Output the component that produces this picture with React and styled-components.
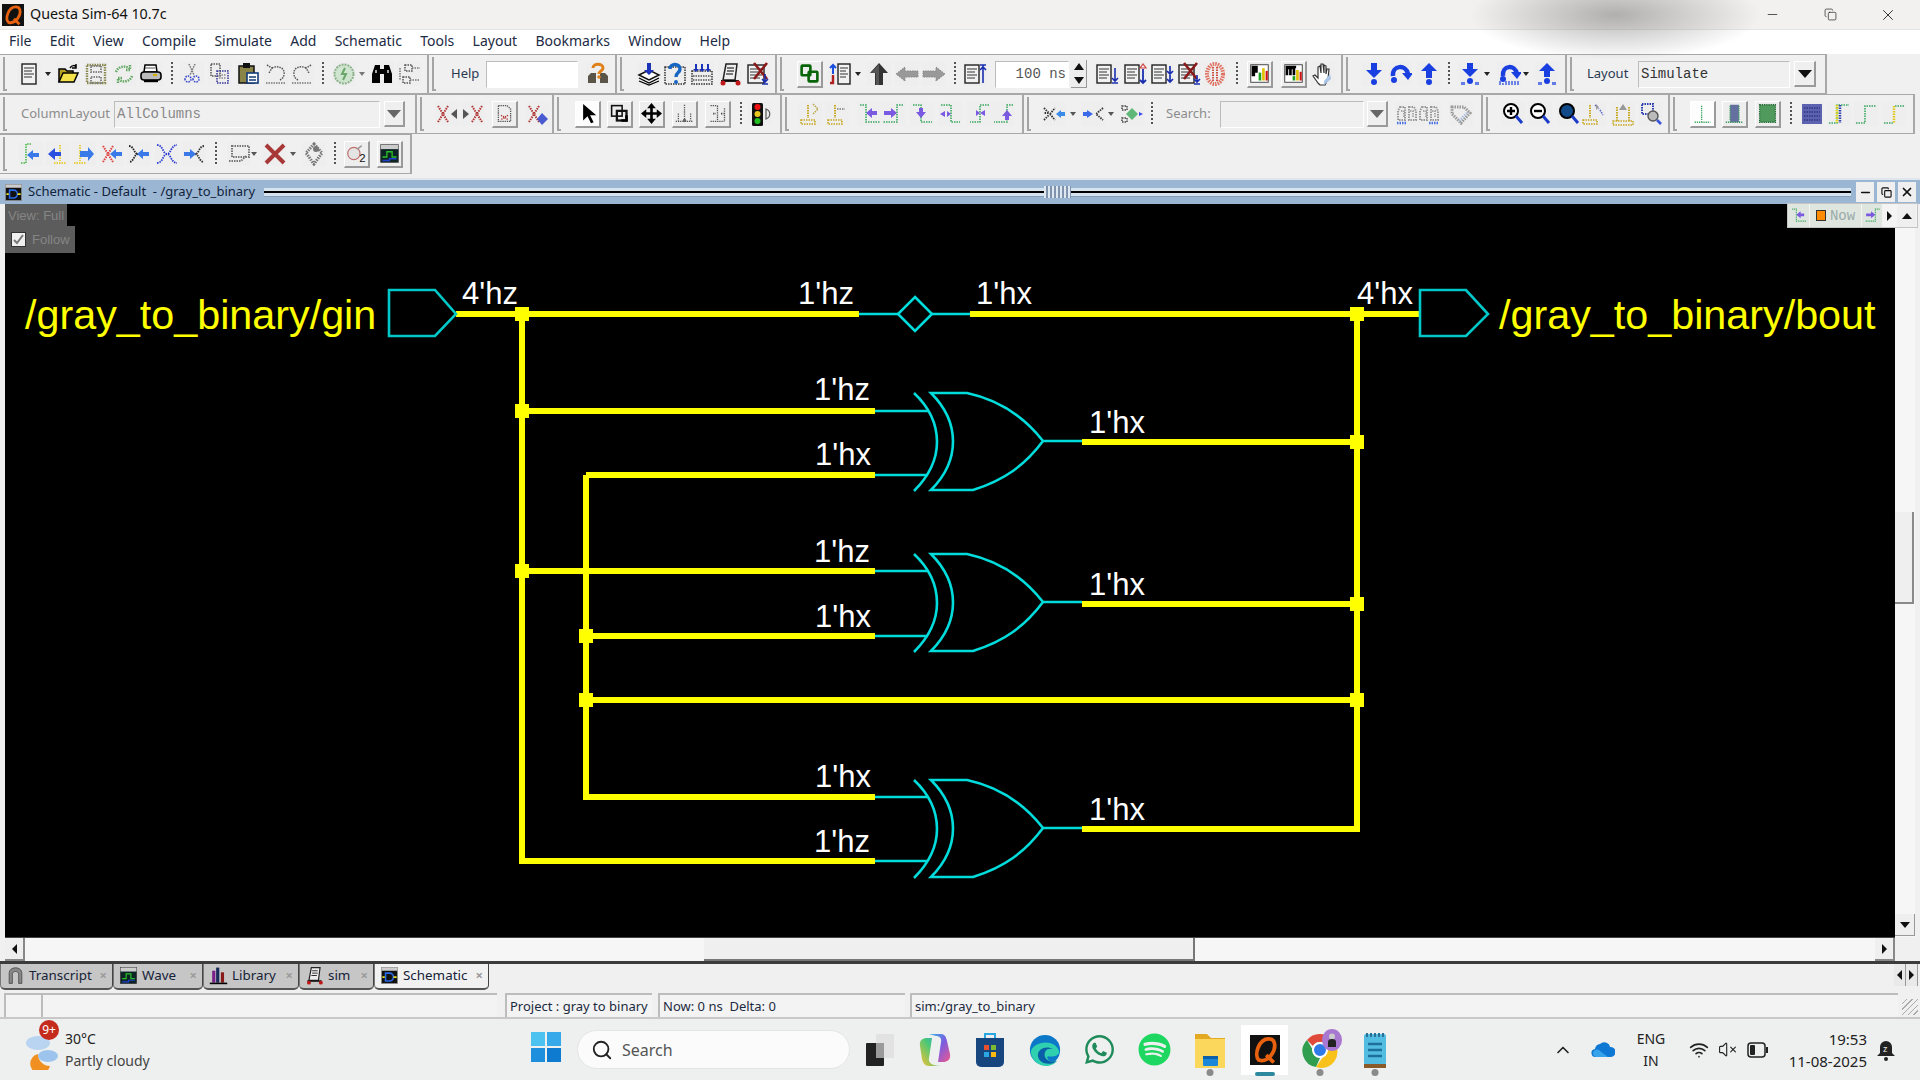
import React from "react"
import styled, { createGlobalStyle } from "styled-components"
import { Search, Wifi, VolumeX, ChevronUp, Minus, X, Copy } from "lucide-react"
import { FaWhatsapp, FaSpotify } from "react-icons/fa"

const GlobalStyle = createGlobalStyle`
  html, body { margin: 0; padding: 0; background: #f0f0f0; overflow: hidden; }
  * { box-sizing: border-box; }
`

const UI_FONT = `"Noto Sans", "Open Sans", sans-serif`
const MONO = `"Liberation Mono", monospace`

const Page = styled.div`
  width: 1920px;
  height: 1080px;
  position: relative;
  display: flex;
  flex-direction: column;
  overflow: hidden;
  background: #f0f0f0;
  font-family: ${UI_FONT};
  color: #222;
`

/* title bar + menu */
const TitleBar = styled.div`
  height: 29px;
  flex: none;
  display: flex;
  align-items: center;
  padding-left: 2px;
  background: #f3f1f0;
  font-size: 14.3px;
  color: #111;
`
const TitleText = styled.span`
  margin-left: 6px;
  margin-top: -2px;
`
const WinControls = styled.div`
  margin-left: auto;
  margin-right: 3px;
  display: flex;
  color: #222;
`
const WinButton = styled.div`
  width: 58px;
  height: 27px;
  display: flex;
  align-items: center;
  justify-content: center;
`
const TitleShade = styled.div`
  position: absolute;
  left: 1470px;
  top: -30px;
  width: 290px;
  height: 90px;
  background: radial-gradient(closest-side, rgba(110, 110, 110, 0.5), rgba(160, 160, 160, 0));
  pointer-events: none;
`
const MenuBar = styled.div`
  height: 25px;
  flex: none;
  display: flex;
  align-items: center;
  padding-left: 9px;
  padding-bottom: 3px;
  gap: 18.3px;
  background: #fff;
  border-top: 1px solid #e4e4e4;
  font-size: 14px;
  color: #1c2b44;
`

/* toolbars */
const ToolRow = styled.div`
  height: 40px;
  flex: none;
  display: flex;
`
const ToolGroup = styled.div`
  width: ${p => p.$w}px;
  flex: none;
  display: flex;
  align-items: center;
  border-top: 1px solid #a8a8a8;
  border-right: 2px solid #a8a8a8;
  border-bottom: 1px solid #a8a8a8;
  background: #f0f0f0;
`
const Handle = styled.div`
  width: 4px;
  height: 34px;
  flex: none;
  margin-left: 3px;
  border-left: 2px solid #a4a4a4;
  border-bottom: 2px solid #a4a4a4;
`
const ToolIcon = styled.div`
  width: ${p => p.$w}px;
  height: ${p => (p.$look ? 27 : 24)}px;
  margin-left: ${p => p.$ml}px;
  flex: none;
  display: flex;
  align-items: center;
  justify-content: center;
  background: ${p => (p.$look === "on" ? "#fdfdfd" : "#eeeeee")};
  border-style: solid;
  border-width: ${p => (p.$look ? "1px 2px 2px 1px" : "0")};
  border-color: #fff #9a9a9a #9a9a9a #fff;
  svg { display: block; }
`
const Sep = styled.div`
  width: 2px;
  height: 24px;
  flex: none;
  margin-left: ${p => p.$ml}px;
  background: repeating-linear-gradient(#555 0 2px, transparent 2px 4px);
`
const DropTip = styled.div`
  width: 0;
  height: 0;
  flex: none;
  margin-left: ${p => p.$ml}px;
  border-left: 3.5px solid transparent;
  border-right: 3.5px solid transparent;
  border-top: 4px solid ${p => p.$c || "#222"};
`
const ToolLabel = styled.div`
  width: ${p => p.$w}px;
  margin-left: ${p => p.$ml}px;
  margin-top: -3px;
  flex: none;
  font-size: 13px;
  white-space: nowrap;
  color: ${p => (p.$dim ? "#8c8c8c" : "#2a3a50")};
`
const ToolInput = styled.div`
  width: ${p => p.$w}px;
  height: 27px;
  margin-left: ${p => p.$ml}px;
  flex: none;
  display: flex;
  align-items: center;
  padding: 0 2px;
  justify-content: ${p => (p.$right ? "flex-end" : "flex-start")};
  font-family: ${MONO};
  font-size: 14px;
  color: ${p => p.$c || "#555"};
  background: ${p => p.$bg || "#f0f0f0"};
  border-style: solid;
  border-width: 1px;
  border-color: #bcbcbc #fff #fff #bcbcbc;
`
const Spinner = styled.div`
  width: 16px;
  height: 28px;
  margin-left: ${p => p.$ml}px;
  flex: none;
  display: flex;
  flex-direction: column;
  align-items: center;
  justify-content: space-around;
  background: #eee;
  border-right: 1px solid #999;
  border-bottom: 1px solid #999;
`
const SpinUp = styled.div`
  border-left: 5px solid transparent;
  border-right: 5px solid transparent;
  border-bottom: 7px solid #111;
`
const SpinDown = styled(SpinUp)`
  border-bottom: 0;
  border-top: 7px solid #111;
`
const ComboButton = styled.div`
  width: ${p => p.$w}px;
  height: 26px;
  margin-left: ${p => p.$ml}px;
  flex: none;
  display: flex;
  align-items: center;
  justify-content: center;
  background: #efefef;
  border-style: solid;
  border-width: 1px 2px 2px 1px;
  border-color: #fff #9a9a9a #9a9a9a #fff;
`
const ComboTip = styled.div`
  border-left: 7px solid transparent;
  border-right: 7px solid transparent;
  border-top: 8px solid ${p => p.$c};
`

/* schematic panel */
const PanelHeader = styled.div`
  height: 26px;
  margin-top: 4px;
  flex: none;
  display: flex;
  align-items: center;
  padding-left: 4px;
  background: #9bb6d2;
  border-top: 2px solid #dfe6ee;
  font-size: 13px;
  color: #10223c;
`
const PanelTitle = styled.span`
  margin-left: 5px;
  width: 236px;
  white-space: pre;
  margin-top: -2px;
`
const GripBars = styled.div`
  width: ${p => p.$w}px;
  height: 9px;
  flex: none;
  background: linear-gradient(#d6e4f0 0 3px, #000 3px 5px, #d6e4f0 5px 8px, #86a0bc 8px 9px);
`
const GripDots = styled.div`
  width: 27px;
  height: 12px;
  flex: none;
  background: repeating-linear-gradient(90deg, #dfe8f0 0 2px, #7f94ac 2px 4px);
`
const PanelButton = styled.div`
  width: 18px;
  height: 20px;
  margin-left: ${p => p.$ml || 3}px;
  flex: none;
  display: flex;
  align-items: center;
  justify-content: center;
  background: #efefef;
  color: #111;
`
const CanvasRow = styled.div`
  height: 733px;
  flex: none;
  position: relative;
  display: flex;
  padding-left: 5px;
  background: #f0f0f0;
`
const Canvas = styled.div`
  width: 1890px;
  height: 733px;
  flex: none;
  position: relative;
  background: #000;
  svg { display: block; }
`
const ViewTag = styled.div`
  position: absolute;
  left: 0;
  top: 0;
  width: 62px;
  height: 22px;
  padding-left: 3px;
  background: #5c5c5c;
  color: #858585;
  font: 13px "Liberation Sans", sans-serif;
  line-height: 24px;
`
const FollowTag = styled.div`
  position: absolute;
  left: 0;
  top: 22px;
  width: 70px;
  height: 27px;
  display: flex;
  align-items: center;
  gap: 6px;
  padding-left: 6px;
  background: #5c5c5c;
  color: #858585;
  font: 13px "Liberation Sans", sans-serif;
`
const FollowBox = styled.div`
  width: 15px;
  height: 15px;
  display: flex;
  align-items: center;
  justify-content: center;
  background: #efefef;
  border: 1px solid #333;
`
const NowBar = styled.div`
  position: absolute;
  right: 2px;
  top: -1px;
  width: 131px;
  height: 25px;
  display: flex;
  align-items: center;
  background: #dfe6df;
  border: 1px solid #c4c4c4;
`
const NowCell = styled.div`
  width: ${p => p.$w}px;
  height: 100%;
  flex: none;
  display: flex;
  align-items: center;
  justify-content: center;
  gap: 4px;
  border-right: 1px solid #f4f4f4;
  font-family: ${MONO};
  font-size: 14px;
  color: #9aa;
  background: ${p => p.$bg || "transparent"};
`
const NowSquare = styled.div`
  width: 10px;
  height: 11px;
  background: #ff8c00;
  border: 1px solid #333;
`
const VScroll = styled.div`
  width: 20px;
  flex: none;
  position: relative;
  background: #f6f6f6;
`
const ScrollThumbV = styled.div`
  position: absolute;
  left: 0;
  right: 1px;
  top: 308px;
  height: 92px;
  background: #efefef;
  border-right: 2px solid #8a8a8a;
  border-bottom: 2px solid #8a8a8a;
`
const ScrollEnd = styled.div`
  position: absolute;
  left: 0;
  ${p => (p.$top ? "top: 1px;" : "bottom: 1px;")}
  width: 20px;
  height: 22px;
  display: flex;
  align-items: center;
  justify-content: center;
  background: #efefef;
  border-right: 1px solid #999;
  border-bottom: 1px solid #999;
`
const TipUp = styled.div`
  border-left: 5px solid transparent;
  border-right: 5px solid transparent;
  border-bottom: 6px solid #111;
`
const TipDown = styled(TipUp)`
  border-bottom: 0;
  border-top: 6px solid #111;
`
const TipLeft = styled.div`
  border-top: 5px solid transparent;
  border-bottom: 5px solid transparent;
  border-right: 5px solid #111;
`
const TipRight = styled(TipLeft)`
  border-right: 0;
  border-left: 5px solid #111;
`
const HScroll = styled.div`
  height: 24px;
  flex: none;
  margin-left: 5px;
  width: 1890px;
  display: flex;
  align-items: stretch;
  background: #f6f6f6;
  border-top: 1px solid #444;
`
const HEnd = styled.div`
  width: 20px;
  flex: none;
  margin-left: ${p => p.$ml || 0}px;
  display: flex;
  align-items: center;
  justify-content: center;
  background: #efefef;
  border-right: 2px solid #888;
  border-bottom: 2px solid #888;
`
const HThumb = styled.div`
  width: 491px;
  flex: none;
  margin-left: ${p => p.$ml}px;
  background: #efefef;
  border-right: 2px solid #777;
  border-bottom: 2px solid #777;
`

/* tabs + status */
const TabStrip = styled.div`
  height: 30px;
  flex: none;
  display: flex;
  align-items: flex-start;
  border-top: 3px solid #3c3c3c;
  background: #f0f0f0;
`
const Tab = styled.div`
  width: ${p => p.$w}px;
  height: 26px;
  flex: none;
  display: flex;
  align-items: center;
  gap: 4px;
  padding-left: 5px;
  padding-bottom: 2px;
  font-size: 13.4px;
  white-space: nowrap;
  color: #152238;
  background: ${p => (p.$active ? "#f1f1f1" : "#c6c6c6")};
  border-right: 1px solid #444;
  border-left: 1px solid #777;
  border-bottom: 2px solid #555;
  border-radius: 0 0 5px 5px;
`
const TabClose = styled.span`
  margin-left: auto;
  margin-right: 5px;
  color: #9a9a9a;
  font-weight: 700;
  font-size: 13px;
`
const TabNav = styled.div`
  margin-left: auto;
  margin-right: 2px;
  display: flex;
  height: 22px;
`
const TabNavButton = styled.div`
  width: 12px;
  display: flex;
  align-items: center;
  justify-content: center;
  background: #e9e9e9;
  border-right: 1px solid #999;
`
const StatusBar = styled.div`
  height: 26px;
  flex: none;
  margin-top: 2px;
  display: flex;
  padding-left: 2px;
  border-bottom: 2px solid #c8c8c8;
  position: relative;
`
const StatusCell = styled.div`
  width: ${p => p.$w}px;
  margin-left: ${p => p.$ml || 0}px;
  flex: none;
  display: flex;
  align-items: center;
  padding-left: 3px;
  font-size: 13px;
  white-space: pre;
  color: #1b2a40;
  background: #f3f3f3;
  border-top: 2px solid #bcbcbc;
  border-left: 2px solid #bcbcbc;
`
const Resizer = styled.div`
  position: absolute;
  right: 2px;
  bottom: 2px;
  width: 16px;
  height: 16px;
  background: repeating-linear-gradient(135deg, transparent 0 3px, #aaa 3px 4px);
`

/* windows taskbar */
const Taskbar = styled.div`
  flex: 1;
  display: flex;
  align-items: center;
  background: #eef0ef;
  color: #222;
  font-family: "Noto Sans", sans-serif;
`
const Weather = styled.div`
  width: 530px;
  flex: none;
  display: flex;
  align-items: center;
  padding-left: 24px;
  position: relative;
`
const WeatherText = styled.div`
  margin-left: 5px;
  font-size: 14px;
  line-height: 22px;
`
const WeatherSub = styled.div`
  color: #444;
`
const Badge = styled.div`
  position: absolute;
  left: 39px;
  top: -8px;
  width: 20px;
  height: 20px;
  border-radius: 50%;
  background: #c42b1c;
  color: #fff;
  font-size: 12px;
  display: flex;
  align-items: center;
  justify-content: center;
`
const StartSlot = styled.div`
  width: 32px;
  flex: none;
`
const SearchPill = styled.div`
  width: 273px;
  height: 39px;
  margin: 0 2px 0 15px;
  flex: none;
  display: flex;
  align-items: center;
  gap: 9px;
  padding-left: 13px;
  border-radius: 20px;
  background: #fbfbfb;
  border: 1px solid #e4e4e4;
  font-size: 16px;
  color: #555;
`
const TaskSlot = styled.div`
  width: 55px;
  height: 60px;
  flex: none;
  position: relative;
  display: flex;
  align-items: center;
  justify-content: center;
  ${p => p.$lit && "background: linear-gradient(#fff, #fff) center / 47px 50px no-repeat;"}
`
const RunDot = styled.div`
  position: absolute;
  bottom: 4px;
  left: 50%;
  transform: translateX(-50%);
  width: ${p => (p.$wide ? 20 : 7)}px;
  height: ${p => (p.$wide ? 4 : 7)}px;
  border-radius: 4px;
  background: ${p => (p.$wide ? "#2d8a9e" : "#8a8a8a")};
`
const ProfileBadge = styled.div`
  position: absolute;
  right: 5px;
  top: 9px;
  width: 20px;
  height: 22px;
  border-radius: 50%;
  background: #a878d0;
  display: flex;
  align-items: center;
  justify-content: center;
`
const Tray = styled.div`
  margin-left: auto;
  margin-right: 20px;
  display: flex;
  align-items: center;
`
const TraySlot = styled.div`
  width: ${p => p.$w}px;
  flex: none;
  display: flex;
  align-items: center;
  justify-content: center;
  color: #222;
`
const LangText = styled.div`
  text-align: center;
  font-size: 14px;
  line-height: 22px;
`
const Clock = styled.div`
  width: 97px;
  flex: none;
  padding-right: 4px;
  text-align: right;
  font-size: 15px;
  line-height: 22px;
  white-space: nowrap;
`

/* small drawing helpers for the toolbar icons */
const Ln = ({ d, c = "#000", w = 1.5 }) => <path d={d} stroke={c} strokeWidth={w} fill="none" />
const Dp = ({ d, c = "#666", w = 1.5 }) => <path d={d} stroke={c} strokeWidth={w} strokeDasharray="1.5 1" fill="none" />
const Fl = ({ d, c = "#000" }) => <path d={d} fill={c} />
const Sheet = ({ x = 4, y = 3, w = 11, h = 17 }) => (
  <>
    <rect x={x} y={y} width={w} height={h} fill="#f2f2f2" stroke="#222" strokeWidth="1.4" />
    <Ln d={`M${x + 2} ${y + 4}h${w - 4}M${x + 2} ${y + 7}h${w - 6}M${x + 2} ${y + 10}h${w - 4}M${x + 2} ${y + 13}h${w - 6}`} c="#333" w={1.1} />
  </>
)
const ArrowDn = ({ x = 19, y = 4, h = 14, c = "#1a2fb0" }) => (
  <Ln d={`M${x} ${y}v${h}M${x - 3} ${y + h - 3}l3 3 3-3M${x - 3} ${y + h + 2}h6`} c={c} w={1.6} />
)
const BlueBlob = ({ x, y }) => <circle cx={x} cy={y} r="3" fill="#1a3fe0" />
const Dots = ({ x = 12, y = 20 }) => (
  <Ln d={`M${x - 8} ${y}v3M${x - 6} ${y}v3M${x + 6} ${y}v3M${x + 8} ${y}v3`} c="#1a3fe0" w={1.3} />
)
const Lens = ({ f = "#fff", children }) => (
  <>
    <circle cx="10" cy="9" r="7" fill={f} stroke="#000" strokeWidth="2" />
    {children}
    <Ln d="M15 14l6 7" c="#1a3cc8" w={3} />
  </>
)
const Broom = ({ x = 12 }) => (
  <>
    <Dp d={`M${x} 3v13`} c="#c8a820" w={2} />
    <Dp d={`M${x - 7} 18h14v4h-14z`} c="#c8a820" w={1.6} />
  </>
)
const Kinks = ({ d, c = "#3aa860" }) => <Dp d={d} c={c} w={1.6} />
const XCross = ({ c = "#b03030", x = 9 }) => <Dp d={`M${x - 5} 4l10 16M${x + 5} 4l-10 16`} c={c} w={2} />
const Tri = ({ d }) => <Fl d={d} c="#555" />
const BinoGrey = () => (
  <>
    <Dp d="M5 5h5v13H3V9zM14 5h5l2 4v9h-7z" c="#999" w={2} />
    <Dp d="M6 9h3v7M15 9h3v7" c="#aaa" w={2} />
  </>
)

const glyphs = {
  doc: <><Sheet x={5} y={2} w={14} h={20} /></>,
  open: <><path d="M3 20V7h6l2 2h6v3" fill="#b8a020" stroke="#000" strokeWidth="1.5" /><path d="M3 20l4-9h15l-4 9z" fill="#f3e24a" stroke="#000" strokeWidth="1.5" /><Ln d="M14 6c2-3 5-3 6-1M20 2v4h-4" w={1.5} /></>,
  save: <><Dp d="M3 3h18v18H3z" c="#8a8a50" w={2.4} /><Dp d="M7 4h10v6H7zM7 15h10v6H7z" c="#888" w={2} /></>,
  reload: <><Dp d="M4 10c2-6 10-7 14-3M18 3v5h-5" c="#62a862" w={2.5} /><Dp d="M20 14c-2 6-10 7-14 3M6 21v-5h5" c="#62a862" w={2.5} /></>,
  print: <><path d="M6 3h11l1 7H5z" fill="#fff" stroke="#000" strokeWidth="1.5" /><rect x="2" y="10" width="20" height="8" rx="3" fill="#bbb" stroke="#000" strokeWidth="1.6" /><Ln d="M5 19h14" w={2.4} /><Ln d="M6 6h10" c="#555" w={1} /><Ln d="M14 13h4" c="#d4b000" w={2} /></>,
  cut: <><Dp d="M9 2l5 11M15 2l-5 11" c="#777" w={1.5} /><Dp d="M5 17a3 3 0 1 0 6 0 3 3 0 1 0-6 0M13 17a3 3 0 1 0 6 0 3 3 0 1 0-6 0" c="#3344cc" w={1.5} /></>,
  copy: <><Dp d="M3 2h9v12H3z" c="#555" /><Dp d="M9 9h11v12H9z" c="#333399" /><Dp d="M11 13h7M11 16h7" c="#888" /></>,
  paste: <><rect x="3" y="4" width="15" height="17" fill="#8a8448" stroke="#111" strokeWidth="1.5" /><rect x="7" y="1" width="7" height="5" fill="#111" /><rect x="11" y="11" width="11" height="10" fill="#fff" stroke="#123a78" strokeWidth="1.6" /><Ln d="M13 15h7M13 18h7" c="#123a78" w={1.3} /></>,
  undo: <><Dp d="M8 6c6-3 13 0 12 6 0 3-2 5-4 6" c="#555" /><Dp d="M3 3l5 3-3 5" c="#555" /><Dp d="M2 21h20" c="#777" /></>,
  redo: <><Dp d="M16 6c-6-3-13 0-12 6 0 3 2 5 4 6" c="#555" /><Dp d="M21 3l-5 3 3 5" c="#555" /><Dp d="M2 21h20" c="#777" /></>,
  compile: <><circle cx="12" cy="12" r="9.5" fill="#cfe5cf" stroke="#8ab08a" strokeWidth="2" strokeDasharray="2 1" /><Ln d="M13 6l-3 6h4l-3 6" c="#6aa86a" w={2} /></>,
  bino: <><Fl d="M5 3h5v4h4V3h5l3 9v9h-8v-9h-4v9H2v-9z" /><Ln d="M6 8v3M18 8v3" c="#ddd" w={1.5} /></>,
  tree: <><Dp d="M8 3h7v6H8zM6 15h7v6H6z" c="#555" /><Dp d="M15 6h8M13 18h9M3 6v12" c="#777" /></>,
  helpq: <><Fl d="M5 11h5v10H2v-7zM14 11h5l3 3v7h-8z" c="#5a5548" /><path d="M7 6c0-5 10-5 10 0 0 3-4 3-4 6" stroke="#e0801a" strokeWidth="3" fill="none" /><circle cx="13" cy="15" r="1.8" fill="#e0801a" /></>,
  stackdn: <><path d="M2 13l10-5 10 5-10 5z" fill="#fff" stroke="#111" strokeWidth="1.5" /><Ln d="M2 16l10 5 10-5M2 19l10 4 10-4" w={1.3} /><Fl d="M10 1h4v7h3l-5 5-5-5h3z" c="#1a33b8" /></>,
  qpage: <><Dp d="M2 5h20v17H2z" c="#333" /><path d="M7 7c0-6 10-6 10 0 0 4-4 3-4 8" stroke="#1766c4" strokeWidth="3.4" fill="none" /><circle cx="13" cy="20" r="2" fill="#1766c4" /></>,
  griparr: <><Dp d="M2 9h20v13H2z" c="#333" /><Dp d="M3 14h18M3 18h18" c="#555" /><Fl d="M5 2h2v5h2l-3 3-3-3h2zM11 2h2v5h2l-3 3-3-3h2zM17 2h2v5h2l-3 3-3-3h2z" c="#1a33b8" /></>,
  cart: <><path d="M8 2h11l-2 16H5z" fill="#eee" stroke="#222" strokeWidth="1.5" /><Ln d="M9 6h7M9 9h7M8 12h7" w={1} /><Ln d="M3 19h18" w={1.8} /><circle cx="5" cy="21" r="2.5" fill="#c01818" /><circle cx="20" cy="21" r="2.5" fill="#c01818" /></>,
  xpage: <><Sheet x={2} y={3} w={16} h={18} /><Ln d="M8 1l13 16M21 1L8 17" c="#8a1a1a" w={2.6} /><ArrowDn x={19} y={12} h={8} /></>,
  link: <><rect x="3" y="3" width="10" height="11" rx="1" fill="none" stroke="#086408" strokeWidth="3" /><rect x="11" y="10" width="10" height="11" rx="1" fill="none" stroke="#086408" strokeWidth="3" /></>,
  zig: <><Sheet x={10} y={2} w={12} h={20} /><Ln d="M5 12V3M2 6l3-3 3 3" c="#1a4fe0" w={2} /><Ln d="M5 13v8H2" c="#b02020" w={2.4} /></>,
  up: <><path d="M12 1l9 10h-5v12H8V11H3z" fill="#333" /><path d="M12 2l-8 9h5v12h3z" fill="#555" /></>,
  left: <><path d="M1 12l9-7v4h13v6H10v4z" fill="#999" stroke="#888" strokeWidth="1" strokeDasharray="1.5 1" /></>,
  right: <><path d="M23 12l-9-7v4H1v6h13v4z" fill="#999" stroke="#888" strokeWidth="1" strokeDasharray="1.5 1" /></>,
  rulerup: <><Sheet x={2} y={3} w={14} h={18} /><Ln d="M20 3v18M17 3h6M17 8l3-3 3 3" c="#1a2fb0" w={1.6} /></>,
  pgdn: <><Sheet x={2} y={3} w={14} h={18} /><ArrowDn x={20} y={6} h={13} /></>,
  pgud: <><Sheet x={2} y={3} w={14} h={18} /><Ln d="M20 7v14M17 18l3 3 3-3" c="#1a2fb0" w={1.8} /><Ln d="M17 6l3-4 3 4z" c="#d04040" w={1.2} /></>,
  pgd2: <><Sheet x={2} y={3} w={14} h={18} /><Ln d="M20 4v8M17 9l3 3 3-3M20 13v7M17 17l3 3 3-3" c="#1a2fb0" w={1.7} /></>,
  pgx: <><Sheet x={2} y={3} w={15} h={18} /><Ln d="M7 1l13 16M20 1L7 17" c="#8a1a1a" w={2.6} /><ArrowDn x={20} y={13} h={7} /></>,
  redc: <><ellipse cx="12" cy="12" rx="8" ry="10" fill="none" stroke="#e07060" strokeWidth="4" strokeDasharray="1.5 1" /><Dp d="M10 5v14M14 5v14" c="#d05040" w={2} /></>,
  perf: <><rect x="2" y="2" width="20" height="20" fill="#fff" stroke="#333" /><Fl d="M3 3h7v8H7v4H3z" /><rect x="11" y="11" width="3" height="9" fill="#1aa01a" /><rect x="15" y="6" width="3" height="14" fill="#e0c000" /><rect x="19" y="9" width="2.4" height="11" fill="#d01010" /></>,
  mem: <><rect x="2" y="2" width="20" height="20" fill="#fff" stroke="#333" /><Fl d="M3 3h12v3h-1v8h-3V7h-1v7H7V7H6v7H3z" /><rect x="11" y="15" width="3" height="5" fill="#1aa01a" /><rect x="15" y="8" width="3" height="12" fill="#e0c000" /><rect x="19" y="10" width="2.4" height="10" fill="#d01010" /></>,
  hand: <><path d="M7 21l-5-7 2-1 3 3V5l2-1 1 7V2h2l1 9V3l2 1v8l1-5h2l-1 10-3 6H9z" fill="#fff" stroke="#333" strokeWidth="1.2" /><Fl d="M13 23l7-6-1-5-6 7z" c="#a8c4e8" /></>,
  stepin: <><Fl d="M9 1h6v7h5l-8 8-8-8h5z" c="#1a3fe0" /><BlueBlob x={12} y={20} /></>,
  stepov: <><path d="M5 14C4 3 18 2 20 12" stroke="#1a3fe0" strokeWidth="4.5" fill="none" /><Fl d="M14 11h11l-5 7z" c="#1a3fe0" /><BlueBlob x={6} y={18} /></>,
  stepout: <><Fl d="M12 1l8 8h-5v7H9V9H4z" c="#1a3fe0" /><BlueBlob x={12} y={20} /></>,
  stepinb: <><Fl d="M9 1h6v6h5l-8 8-8-8h5z" c="#1a3fe0" /><BlueBlob x={12} y={19} /><Dots /></>,
  stepovb: <><path d="M6 14C5 3 18 2 20 12" stroke="#1a3fe0" strokeWidth="4.5" fill="none" /><Fl d="M14 10h11l-5 7z" c="#1a3fe0" /><BlueBlob x={6} y={17} /><Ln d="M3 19v4M6 21v2M9 19v4M12 19v4M15 19v4M18 19v4M21 19v4" c="#1a3fe0" w={1.2} /></>,
  stepoub: <><Fl d="M12 1l8 8h-5v6H9V9H4z" c="#1a3fe0" /><BlueBlob x={12} y={19} /><Dots /></>,
  xl: <><XCross x={8} /><Tri d="M22 7l-6 5 6 5z" /></>,
  xr: <><XCross x={16} /><Tri d="M2 7l6 5-6 5z" /></>,
  dpage: <><Dp d="M5 3h10l4 4v14H5z" c="#555" /><Dp d="M8 14l8 5M16 14l-8 5" c="#b03030" /></>,
  xarr: <><XCross x={8} /><Fl d="M16 11l6 6-6 6-5-6z" c="#4a5ad0" /></>,
  cursor: <><path d="M7 1v19l5-5 4 8 3-1-4-8h7z" fill="#000" /></>,
  zrect: <><rect x="3" y="3" width="12" height="12" fill="none" stroke="#111" strokeWidth="1.8" /><rect x="9" y="9" width="11" height="11" fill="none" stroke="#111" strokeWidth="2.6" /><Ln d="M14 20h6v-6" w={3} /></>,
  move: <><Ln d="M12 3v18M3 12h18" w={3} /><Fl d="M12 0l5 6H7zM12 24l5-6H7zM0 12l6-5v10zM24 12l-6-5v10z" /></>,
  rul: <><Dp d="M12 2v18M2 21h20" c="#555" /><Dp d="M5 12v8M19 12v8" c="#555" /><circle cx="12" cy="20" r="2" fill="#666" /></>,
  rulb: <><Dp d="M4 3h8M12 3v18M4 21h16M20 6v15" c="#555" /><Dp d="M7 12h3M16 12h3" c="#444" w={2} /></>,
  traffic: <><rect x="4" y="1" width="11" height="23" rx="1.5" fill="#111" /><circle cx="9.5" cy="5" r="3" fill="#f01010" /><circle cx="9.5" cy="12" r="3" fill="#e8c820" /><circle cx="9.5" cy="19" r="3" fill="#20c020" /><Ln d="M18 7c5 2 5 8 0 10z" c="#555" w={1.2} /></>,
  brm1: <><Broom x={10} /><Dp d="M15 2l5 5-5 5" c="#bbaa50" w={1.6} /></>,
  brm2: <><Broom x={10} /><Dp d="M12 7h8" c="#999" w={1.8} /></>,
  gl: <><Kinks d="M3 3h6v17h14" /><Fl d="M9 11l6-5v3h5v4h-5v3z" c="#7a5ae0" /></>,
  gr: <><Kinks d="M22 3h-6v17H2" /><Fl d="M16 11l-6-5v3H3v4h7v3z" c="#7a5ae0" /></>,
  gd: <><Kinks d="M3 3h8v17h11" /><Fl d="M11 16l-5-6h3V6h4v4h3z" c="#7a5ae0" /></>,
  gld: <><Kinks d="M3 3h10v17h9" /><Fl d="M2 12l5-3v6zM13 12l-4 3v-6zM13 8v8" c="#7a5ae0" /></>,
  gu: <><Kinks d="M22 3h-9v17H3" /><Fl d="M13 11l5-3v6zM13 11l-4 3V8z" c="#7a5ae0" /></>,
  gru: <><Kinks d="M22 3h-6v17H3" /><Fl d="M16 8l-5 6h3v4h4v-4h3z" c="#7a5ae0" /></>,
  search1: <><Dp d="M2 6l5 5-5 0M2 18l5-5" c="#333" w={1.8} /><Dp d="M8 12l5-6M8 12l5 6" c="#333" w={1.8} /><Fl d="M14 12l5-4v2h4v4h-4v2z" c="#3a8ae8" /></>,
  search2: <><Dp d="M22 6l-7 6 7 6" c="#333" w={1.8} /><Fl d="M2 10h4V8l6 4-6 4v-2H2z" c="#3a6ae8" /></>,
  search3: <><Dp d="M2 4h5v4H2zM2 16h5v4H2z" c="#444" /><Fl d="M12 6l6 6-6 6-6-6z" c="#60b878" /><Fl d="M19 10l4 2-4 2z" c="#3a4ae8" /></>,
  bf1: <><BinoGrey /><Dp d="M2 21h10" c="#4a70e0" w={2.4} /></>,
  bf2: <><BinoGrey /><Dp d="M12 21h10" c="#4a70e0" w={2.4} /></>,
  bf3: <><Dp d="M3 5h12l6 6-9 10-9-9z" c="#999" w={3} /><Dp d="M10 19l9-9" c="#b0c0e0" w={2.4} /></>,
  zin: <Lens><Ln d="M6 9h8M10 5v8" w={2.4} /></Lens>,
  zout: <Lens><Ln d="M6 9h8" w={2.4} /></Lens>,
  zfull: <Lens f="#104a88" />,
  yz1: <><Broom x={8} /><Dp d="M13 3l4 4M18 8l3 5" c="#5566cc" /><Fl d="M14 2l3 3-3 3z" c="#999" /></>,
  yz2: <><Dp d="M6 5v14M18 5v14" c="#c8a820" w={2} /><Dp d="M2 19h20v4H2z" c="#c8a820" /><Fl d="M12 2l4 6H8z" c="#999" /></>,
  zs: <><Dp d="M3 2h11v10H3z" c="#2a3ab0" w={2} /><circle cx="14" cy="14" r="5" fill="#bbb" stroke="#555" strokeWidth="1.4" /><Ln d="M18 18l4 4" c="#3a55d8" w={2.6} /></>,
  box1: <><Dp d="M11 3v18M3 22h18" c="#3aa860" /></>,
  box2: <><rect x="7" y="2" width="10" height="20" fill="#6670a0" /><Dp d="M2 22h20M7 3v18M17 3v18" c="#3a9860" /></>,
  box3: <><rect x="3" y="2" width="18" height="20" fill="#4f9a5c" /><Dp d="M3 2h18v20H3z" c="#2a6a3a" /></>,
  box4: <><rect x="2" y="2" width="20" height="20" fill="#5c62b0" /><Dp d="M4 6h16M4 10h16M4 14h16M4 18h16" c="#39408c" w={2} /></>,
  w1: <><Kinks d="M2 21h8V3h12" /><Dp d="M10 3v18" c="#e8d820" w={3} /><Dp d="M13 3v18" c="#3040b0" w={2.5} /></>,
  w2: <Kinks d="M2 21h9V4h11" />,
  w3: <><Kinks d="M13 4h9M2 21h9" /><Dp d="M12 4v17" c="#e0c820" w={2.5} /></>,
  fl: <><Kinks d="M2 21h5V2h5" c="#48b848" /><Fl d="M8 13l6-5v3h6v4h-6v3z" c="#3a7ae8" /></>,
  bfl: <><Dp d="M14 3v16M8 21h12" c="#e8d040" w={2} /><Fl d="M2 12l7-6v12z" c="#2a50e0" /><Fl d="M9 10h6v4H9z" c="#2a50e0" /></>,
  yfl: <><Dp d="M8 3v16M2 21h12" c="#e8d040" w={2} /><Fl d="M8 9h8V5l6 7-6 7v-4H8z" c="#3a7ae8" /></>,
  rfl: <><XCross c="#e04040" x={8} /><Fl d="M10 12l6-5v3h6v4h-6v3z" c="#3a7ae8" /></>,
  kfl: <><Dp d="M2 4c5 0 5 8 9 8-4 0-4 8-9 8" c="#222" w={1.8} /><Fl d="M10 12l6-5v3h6v4h-6v3z" c="#3a7ae8" /></>,
  bx: <><Dp d="M2 3c6 0 6 9 10 9 4 0 4-9 10-9M2 21c6 0 6-9 10-9 4 0 4 9 10 9" c="#2a3ad0" w={1.8} /></>,
  bfr: <><Dp d="M22 4c-5 0-5 8-9 8 4 0 4 8 9 8" c="#333" w={1.8} /><Fl d="M2 10h6V7l6 5-6 5v-3H2z" c="#3a7ae8" /></>,
  cmt: <><Dp d="M5 4h17v11H5z" c="#777" w={2} /><Dp d="M2 19h12l5-5" c="#777" w={2} /></>,
  xx: <><Ln d="M3 3l18 18M21 3L3 21" c="#a83838" w={4} /></>,
  clear: <><Dp d="M12 2l8 9-8 11-8-11z" c="#777" w={3} /><circle cx="14" cy="7" r="3" fill="#777" /></>,
  ball: <><ellipse cx="9" cy="12" rx="7" ry="7" fill="#e4e4e4" stroke="#c07070" strokeWidth="1.4" /><Ln d="M18 3l-5 4" c="#999" /><text x="15" y="22" fontSize="13" fontFamily="Liberation Sans" fill="#111">2</text></>,
  wave: <><rect x="2" y="2" width="20" height="20" fill="#0c2424" stroke="#333" /><rect x="2" y="2" width="20" height="5" fill="#ccc" /><Ln d="M4 16h5v-6h6v6h5" c="#2ac02a" w={1.5} /><Ln d="M4 20h8v-2h8" c="#2040d0" w={1.5} /></>,
  schem: <><rect x="2" y="2" width="20" height="20" fill="#111" stroke="#888" /><rect x="2" y="2" width="20" height="4" fill="#ccc" /><path d="M7 9h5a5 5 0 0 1 0 10H7z" fill="#111" stroke="#2a6ae8" strokeWidth="2" /><Ln d="M3 14h3M17 14h4" c="#e8e020" w={2} /></>,
  arch: <><path d="M4 22V9c0-9 16-9 16 0v13h-4V10c0-4-8-4-8 0v12z" fill="#888" stroke="#444" /></>,
  books: <><rect x="4" y="6" width="4" height="15" fill="#7a1e8a" /><rect x="9" y="2" width="4" height="19" fill="#1a2a5a" /><rect x="15" y="8" width="4" height="13" fill="#8a1a1a" /><Ln d="M1 22h22" w={2} /></>,
}

const Glyph = ({ name, size = 24 }) => (
  <svg width={size} height={size} viewBox="0 0 24 24">
    {glyphs[name]}
  </svg>
)

const icon = (name, c, look) => ({ kind: "icon", name, left: c - (look ? 13 : 12), w: look ? 26 : 24, look })
const sep = c => ({ kind: "sep", left: c - 1, w: 2 })
const tip = (c, color) => ({ kind: "tip", left: c - 3.5, w: 7, color })
const label = (text, left, w, dim) => ({ kind: "label", text, left, w, dim })
const field = (text, left, w, opts) => ({ kind: "field", text, left, w, ...opts })
const combo = (c, w, color = "#666") => ({ kind: "combo", left: c - w / 2, w, color })
const spin = c => ({ kind: "spin", left: c - 8, w: 16 })

const toolRows = [
  [
    { x: 0, w: 429, items: [icon("doc", 29), tip(48), icon("open", 68), icon("save", 96), icon("reload", 124), icon("print", 151), sep(172), icon("cut", 192), icon("copy", 220), icon("paste", 248), icon("undo", 276), icon("redo", 302), sep(323), icon("compile", 344), tip(362, "#777"), icon("bino", 382), icon("tree", 409)] },
    { x: 429, w: 188, items: [label("Help", 451, 30), field("", 486, 92, { bg: "#fff" }), icon("helpq", 598)] },
    { x: 617, w: 160, items: [icon("stackdn", 649), icon("qpage", 675), icon("griparr", 702), icon("cart", 730), icon("xpage", 758)] },
    { x: 777, w: 566, items: [icon("link", 810, "up"), icon("zig", 840), tip(858), icon("up", 879), icon("left", 907), icon("right", 934), sep(955), icon("rulerup", 975), field("100 ns", 995, 74, { right: true, bg: "#fff" }), spin(1079), icon("pgdn", 1107), icon("pgud", 1135), icon("pgd2", 1162), icon("pgx", 1189), icon("redc", 1215), sep(1237), icon("perf", 1260, "up"), icon("mem", 1294, "up"), icon("hand", 1323)] },
    { x: 1343, w: 224, items: [icon("stepin", 1374), icon("stepov", 1400), icon("stepout", 1429), sep(1449), icon("stepinb", 1470), tip(1487), icon("stepovb", 1509), tip(1526), icon("stepoub", 1547)] },
    { x: 1567, w: 260, items: [label("Layout", 1587, 46), field("Simulate", 1638, 152, { c: "#333" }), combo(1805, 22, "#111")] },
  ],
  [
    { x: 0, w: 417, items: [label("ColumnLayout", 21, 90, true), field("AllColumns", 114, 266, { c: "#888" }), combo(394, 21)] },
    { x: 417, w: 137, items: [icon("xl", 447), icon("xr", 473), icon("dpage", 505, "up"), icon("xarr", 538)] },
    { x: 554, w: 228, items: [icon("cursor", 588, "on"), icon("zrect", 620, "up"), icon("move", 652, "up"), icon("rul", 685, "up"), icon("rulb", 718, "up"), sep(741), icon("traffic", 760)] },
    { x: 782, w: 242, items: [icon("brm1", 810), icon("brm2", 837), icon("gl", 869), icon("gr", 893), icon("gd", 922), icon("gld", 950), icon("gu", 979), icon("gru", 1003)] },
    { x: 1024, w: 459, items: [icon("search1", 1054), tip(1073, "#555"), icon("search2", 1093), tip(1111, "#555"), icon("search3", 1132), sep(1152), label("Search:", 1166, 46, true), field("", 1220, 144), combo(1377, 21), icon("bf1", 1406), icon("bf2", 1428), icon("bf3", 1460)] },
    { x: 1483, w: 187, items: [icon("zin", 1513), icon("zout", 1540), icon("zfull", 1569), icon("yz1", 1594), icon("yz2", 1623), icon("zs", 1651)] },
    { x: 1670, w: 245, items: [icon("box1", 1703, "on"), icon("box2", 1735, "up"), icon("box3", 1768, "up"), sep(1791), icon("box4", 1812), icon("w1", 1839), icon("w2", 1866), icon("w3", 1894)] },
  ],
  [
    { x: 0, w: 412, items: [icon("fl", 31), icon("bfl", 58), icon("yfl", 84), icon("rfl", 112), icon("kfl", 139), icon("bx", 167), icon("bfr", 194), sep(216), icon("cmt", 239), tip(254, "#555"), icon("xx", 275), tip(293, "#555"), icon("clear", 314), sep(335), icon("ball", 357, "up"), icon("wave", 390, "up")] },
  ],
]

const Toolbars = () =>
  toolRows.map((groups, r) => (
    <ToolRow key={r}>
      {groups.map(g => {
        let cursor = g.x + 7
        return (
          <ToolGroup key={g.x} $w={g.w}>
            <Handle />
            {g.items.map((it, i) => {
              const ml = Math.round(it.left - cursor)
              cursor = it.left + it.w
              if (it.kind === "sep") return <Sep key={i} $ml={ml} />
              if (it.kind === "tip") return <DropTip key={i} $ml={ml} $c={it.color} />
              if (it.kind === "label") return <ToolLabel key={i} $ml={ml} $w={it.w} $dim={it.dim}>{it.text}</ToolLabel>
              if (it.kind === "field") return <ToolInput key={i} $ml={ml} $w={it.w} $bg={it.bg} $c={it.c} $right={it.right}>{it.text}</ToolInput>
              if (it.kind === "combo") return <ComboButton key={i} $ml={ml} $w={it.w}><ComboTip $c={it.color} /></ComboButton>
              if (it.kind === "spin") return <Spinner key={i} $ml={ml}><SpinUp /><SpinDown /></Spinner>
              return <ToolIcon key={i} $ml={ml} $w={it.w} $look={it.look}><Glyph name={it.name} size={it.look ? 21 : 24} /></ToolIcon>
            })}
          </ToolGroup>
        )
      })}
    </ToolRow>
  ))

/* schematic drawing, in page coordinates */
const YELLOW = "#ffff00"
const CYAN = "#00dcdc"
const wires = [
  "M456 314H859", "M970 314H1419", "M522 314V861H875", "M522 411H875", "M586 475H875", "M586 475V797H875",
  "M522 571H875", "M586 636H875", "M586 700H1357", "M1357 314V829H1082", "M1082 442H1357", "M1082 604H1357",
]
const thin = ["M859 314H898", "M932 314H970"]
const junctions = [[522, 314], [522, 411], [522, 571], [586, 636], [586, 700], [1357, 314], [1357, 442], [1357, 604], [1357, 700]]
const gates = [
  { y: 441, a: 411, b: 475 },
  { y: 602, a: 571, b: 636 },
  { y: 828, a: 797, b: 861 },
]
const tags = [
  ["4'hz", 462, 304], ["1'hz", 798, 304], ["1'hx", 976, 304], ["4'hx", 1357, 304],
  ["1'hz", 814, 400], ["1'hx", 815, 465], ["1'hx", 1089, 433],
  ["1'hz", 814, 562], ["1'hx", 815, 627], ["1'hx", 1089, 595],
  ["1'hx", 815, 787], ["1'hz", 814, 852], ["1'hx", 1089, 820],
]

const Gate = ({ y, a, b }) => {
  const r = y - 441
  return (
    <g transform={`translate(0 ${r})`} fill="none" stroke={CYAN} strokeWidth="2.6">
      <path d="M914 393C930 408 937 425 937 442C937 458 930 475 914 491" />
      <path d="M931 393H967C1000 400 1025 418 1043 441C1025 465 1005 480 973 490H931C946 475 953 458 953 441.5C953 425 946 408 931 393Z" />
      <path d={`M875 ${a - r}H928M875 ${b - r}H928M1043 441H1082`} />
    </g>
  )
}

const Schematic = () => (
  <svg width="1890" height="733" viewBox="5 204 1890 733">
    <g fill="none" stroke={YELLOW} strokeWidth="6">
      {wires.map(d => <path key={d} d={d} />)}
    </g>
    <g fill="none" stroke={CYAN} strokeWidth="2.6">
      {thin.map(d => <path key={d} d={d} />)}
      <path d="M915 297L932 314L915 331L898 314Z" />
      <path d="M389 290H435L456 314L435 336H389Z" stroke="#00c8c8" />
      <path d="M1420 290H1466L1488 314L1466 336H1420Z" stroke="#00c8c8" />
    </g>
    {gates.map(g => <Gate key={g.y} {...g} />)}
    {junctions.map(([x, y]) => <rect key={`${x}-${y}`} x={x - 7} y={y - 7} width="14" height="14" fill={YELLOW} />)}
    <g fontFamily='"Liberation Sans", sans-serif'>
      <text x="25" y="329" fontSize="41.3" fill={YELLOW}>/gray_to_binary/gin</text>
      <text x="1499" y="329" fontSize="41.3" fill={YELLOW}>/gray_to_binary/bout</text>
      {tags.map(([t, x, y]) => <text key={`${x}-${y}`} x={x} y={y} fontSize="31" fill="#fff">{t}</text>)}
    </g>
  </svg>
)

const QLogo = ({ size }) => (
  <svg width={size} height={size} viewBox="0 0 24 24">
    <rect width="24" height="24" fill="#111" />
    <path d="M7 20C3 16 7 3 15 3c6 0 6 8 2 13-3 4-7 5-10 4zM13 16l6 6" fill="none" stroke="#e8610e" strokeWidth="3" />
  </svg>
)

const Folder = () => (
  <svg width="32" height="36" viewBox="0 0 32 36">
    <path d="M1 2h12l4 4h14v30H1z" fill="#e3a923" />
    <rect x="1" y="7" width="30" height="29" fill="#fbd75b" />
    <rect x="9" y="24" width="15" height="10" rx="1" fill="#1b87d8" />
    <rect x="9" y="24" width="15" height="3" fill="#0f5fa8" />
  </svg>
)
const Chrome = () => (
  <svg width="36" height="36" viewBox="0 0 36 36">
    <path d="M18 2a16 16 0 0 1 14 8H18a8 8 0 0 0-7 4L5 8a16 16 0 0 1 13-6z" fill="#e04a3a" />
    <path d="M5 8l7 12a8 8 0 0 0 6 6l-4 9A16 16 0 0 1 5 8z" fill="#2f9e4f" />
    <path d="M32 10a16 16 0 0 1-18 25l7-10a8 8 0 0 0 3-9l-2-6z" fill="#f9c21a" />
    <circle cx="18" cy="18" r="7" fill="#2f7ae6" stroke="#fff" strokeWidth="2" />
  </svg>
)
const Notepad = () => (
  <svg width="24" height="36" viewBox="0 0 24 36">
    <rect x="1" y="2" width="22" height="31" rx="2" fill="#52bde0" />
    <rect x="1" y="32" width="22" height="4" fill="#8b5a2b" />
    <path d="M5 12h14M5 18h14M5 24h14" stroke="#1d6f9c" strokeWidth="2.4" />
    <path d="M4 1v4M8 1v4M12 1v4M16 1v4M20 1v4" stroke="#2a6f96" strokeWidth="2" />
  </svg>
)
const Store = () => (
  <svg width="30" height="36" viewBox="0 0 30 36">
    <path d="M10 6V2h10v4" fill="none" stroke="#2aa6e0" strokeWidth="2" />
    <path d="M1 6h28v24a5 5 0 0 1-5 5H6a5 5 0 0 1-5-5z" fill="#17467f" />
    <rect x="9" y="13" width="5" height="5" fill="#e8502f" /><rect x="16" y="13" width="5" height="5" fill="#7dba2f" />
    <rect x="9" y="20" width="5" height="5" fill="#2aa6e0" /><rect x="16" y="20" width="5" height="5" fill="#fcb80f" />
  </svg>
)
const Edge = () => (
  <svg width="32" height="36" viewBox="0 0 36 36">
    <circle cx="18" cy="18" r="17" fill="#0c78c8" />
    <path d="M2 20C4 8 30 4 34 20c0 5-8 6-13 5-2 4 5 8 11 5a17 17 0 0 1-30-10z" fill="#2ed0b0" />
    <path d="M10 24c0-8 10-11 17-7-6-2-11 2-9 9 2 5 8 6 13 4-7 7-21 3-21-6z" fill="#0a5ea8" />
  </svg>
)
const Copilot = () => (
  <svg width="32" height="36" viewBox="0 0 32 36">
    <defs>
      <linearGradient id="cp" x1="0" y1="0" x2="1" y2="1">
        <stop offset="0" stopColor="#35b7e8" /><stop offset="0.5" stopColor="#7c5ce0" /><stop offset="1" stopColor="#f0588c" />
      </linearGradient>
      <linearGradient id="cq" x1="0" y1="1" x2="1" y2="0">
        <stop offset="0" stopColor="#f8c030" /><stop offset="0.6" stopColor="#48c878" /><stop offset="1" stopColor="#30a0e0" />
      </linearGradient>
    </defs>
    <path d="M10 2h12c4 0 5 3 6 7l3 13c1 6-3 8-7 8h-5l3-20c1-4-2-6-5-6z" fill="url(#cp)" />
    <path d="M22 34H10c-4 0-6-3-7-7L1 14c-1-6 3-8 7-8h5l-3 20c-1 4 2 8 12 8z" fill="url(#cq)" />
  </svg>
)
const Windows = () => (
  <svg width="32" height="32" viewBox="0 0 32 32">
    <path d="M1 1h14v14H1z" fill="#4cc2f1" /><path d="M17 1h14v14H17z" fill="#36a9ea" />
    <path d="M1 17h14v14H1z" fill="#1e8fdc" /><path d="M17 17h14v14H17z" fill="#0f7bd0" />
  </svg>
)
const WeatherIcon = () => (
  <svg width="36" height="40" viewBox="0 0 36 40">
    <path d="M14 24a10 10 0 1 0 12 12A12 12 0 0 1 14 24z" fill="#f09020" />
    <ellipse cx="14" cy="13" rx="12" ry="7" fill="#b8d4f0" />
    <ellipse cx="24" cy="26" rx="10" ry="6" fill="#9cc4ec" />
  </svg>
)
const OneDrive = () => (
  <svg width="24" height="20" viewBox="0 0 24 20">
    <path d="M9 4a6 6 0 0 1 10 3 5 5 0 0 1 1 10H5a4 4 0 0 1-1-8 6 6 0 0 1 5-5z" fill="#0f78d4" />
    <path d="M2 14a4 4 0 0 1 7-3l8 6H5a4 4 0 0 1-3-3z" fill="#36a3ea" />
  </svg>
)
const Battery = () => (
  <svg width="22" height="18" viewBox="0 0 22 18">
    <rect x="1" y="2" width="17" height="14" rx="3" fill="none" stroke="#222" strokeWidth="1.5" />
    <rect x="3" y="4" width="5" height="10" rx="1" fill="#222" />
    <rect x="19" y="6" width="2" height="6" fill="#222" />
  </svg>
)
const QuietBell = () => (
  <svg width="22" height="24" viewBox="0 0 22 24">
    <path d="M11 3a6 6 0 0 0-6 6v6l-3 3h18l-3-3V9a6 6 0 0 0-6-6z" fill="#222" />
    <circle cx="11" cy="21" r="2" fill="#222" />
    <text x="8" y="14" fontSize="9" fontFamily="Liberation Sans" fill="#eee">z</text>
  </svg>
)

const tabs = [
  { label: "Transcript", w: 113, icon: "arch" },
  { label: "Wave", w: 90, icon: "wave" },
  { label: "Library", w: 96, icon: "books" },
  { label: "sim", w: 75, icon: "cart" },
  { label: "Schematic", w: 115, icon: "schem", active: true },
]

const App = () => (
  <Page>
    <GlobalStyle />
    <TitleBar>
      <QLogo size={22} />
      <TitleText>Questa Sim-64 10.7c</TitleText>
      <WinControls>
        <WinButton><Minus size={15} strokeWidth={1.2} /></WinButton>
        <WinButton><Copy size={13} strokeWidth={1.3} /></WinButton>
        <WinButton><X size={18} strokeWidth={1.2} /></WinButton>
      </WinControls>
    </TitleBar>
    <TitleShade />
    <MenuBar>
      {["File", "Edit", "View", "Compile", "Simulate", "Add", "Schematic", "Tools", "Layout", "Bookmarks", "Window", "Help"].map(m => (
        <span key={m}>{m}</span>
      ))}
    </MenuBar>
    <Toolbars />
    <PanelHeader>
      <Glyph name="schem" size={19} />
      <PanelTitle>Schematic - Default  - /gray_to_binary</PanelTitle>
      <GripBars $w={780} />
      <GripDots />
      <GripBars $w={780} />
      <PanelButton $ml={5}><Minus size={13} strokeWidth={3} /></PanelButton>
      <PanelButton><Copy size={11} strokeWidth={2.4} /></PanelButton>
      <PanelButton><X size={14} strokeWidth={3} /></PanelButton>
    </PanelHeader>
    <CanvasRow>
      <Canvas>
        <Schematic />
        <ViewTag>View: Full</ViewTag>
        <FollowTag>
          <FollowBox>
            <svg width="11" height="11" viewBox="0 0 11 11"><path d="M1 6l3 3 6-8" fill="none" stroke="#777" strokeWidth="2" /></svg>
          </FollowBox>
          Follow
        </FollowTag>
      </Canvas>
      <VScroll>
        <ScrollEnd $top><TipUp /></ScrollEnd>
        <ScrollThumbV />
        <ScrollEnd><TipDown /></ScrollEnd>
      </VScroll>
      <NowBar>
        <NowCell $w={22}><Glyph name="gl" size={17} /></NowCell>
        <NowCell $w={52}><NowSquare />Now</NowCell>
        <NowCell $w={21}><Glyph name="gr" size={17} /></NowCell>
        <NowCell $w={14} $bg="#f4f4f4"><TipRight /></NowCell>
        <NowCell $w={20} $bg="#efefef"><TipUp /></NowCell>
      </NowBar>
    </CanvasRow>
    <HScroll>
      <HEnd><TipLeft /></HEnd>
      <HThumb $ml={679} />
      <HEnd $ml={680}><TipRight /></HEnd>
    </HScroll>
    <TabStrip>
      {tabs.map(t => (
        <Tab key={t.label} $w={t.w} $active={t.active}>
          <Glyph name={t.icon} size={19} />
          {t.label}
          <TabClose>×</TabClose>
        </Tab>
      ))}
      <TabNav>
        <TabNavButton><TipLeft /></TabNavButton>
        <TabNavButton><TipRight /></TabNavButton>
      </TabNav>
    </TabStrip>
    <StatusBar>
      <StatusCell $w={37} $ml={2} />
      <StatusCell $w={456} />
      <StatusCell $w={147} $ml={8}>Project : gray to binary</StatusCell>
      <StatusCell $w={247} $ml={6}>Now: 0 ns  Delta: 0</StatusCell>
      <StatusCell $w={988} $ml={5}>sim:/gray_to_binary</StatusCell>
      <Resizer />
    </StatusBar>
    <Taskbar>
      <Weather>
        <WeatherIcon />
        <Badge>9+</Badge>
        <WeatherText>
          30°C
          <WeatherSub>Partly cloudy</WeatherSub>
        </WeatherText>
      </Weather>
      <StartSlot><Windows /></StartSlot>
      <SearchPill><Search size={22} color="#222" />Search</SearchPill>
      <TaskSlot>
        <svg width="28" height="32" viewBox="0 0 28 32">
          <rect x="10" y="0" width="18" height="24" fill="#e2e2e2" />
          <rect x="0" y="9" width="18" height="23" rx="1" fill="#222" />
          <rect x="10" y="9" width="8" height="15" fill="#9a9a9a" />
        </svg>
      </TaskSlot>
      <TaskSlot><Copilot /></TaskSlot>
      <TaskSlot><Store /></TaskSlot>
      <TaskSlot><Edge /></TaskSlot>
      <TaskSlot><FaWhatsapp size={33} color="#1f8a5a" /></TaskSlot>
      <TaskSlot><FaSpotify size={33} color="#1ed760" /></TaskSlot>
      <TaskSlot><Folder /><RunDot /></TaskSlot>
      <TaskSlot $lit><QLogo size={30} /><RunDot $wide /></TaskSlot>
      <TaskSlot>
        <Chrome />
        <ProfileBadge>
          <svg width="10" height="14" viewBox="0 0 10 14"><circle cx="5" cy="3.5" r="3" fill="#ccc" /><path d="M1 14V9a4 3 0 0 1 8 0v5z" fill="#222" /></svg>
        </ProfileBadge>
        <RunDot />
      </TaskSlot>
      <TaskSlot><Notepad /><RunDot /></TaskSlot>
      <Tray>
        <TraySlot $w={36}><ChevronUp size={20} /></TraySlot>
        <TraySlot $w={44}><OneDrive /></TraySlot>
        <TraySlot $w={52}><LangText>ENG<br />IN</LangText></TraySlot>
        <TraySlot $w={8} />
        <TraySlot $w={27}><Wifi size={20} /></TraySlot>
        <TraySlot $w={30}><VolumeX size={19} strokeWidth={1.4} /></TraySlot>
        <TraySlot $w={32}><Battery /></TraySlot>
        <Clock>19:53<br />11-08-2025</Clock>
        <TraySlot $w={29}><QuietBell /></TraySlot>
      </Tray>
    </Taskbar>
  </Page>
)

export default App
